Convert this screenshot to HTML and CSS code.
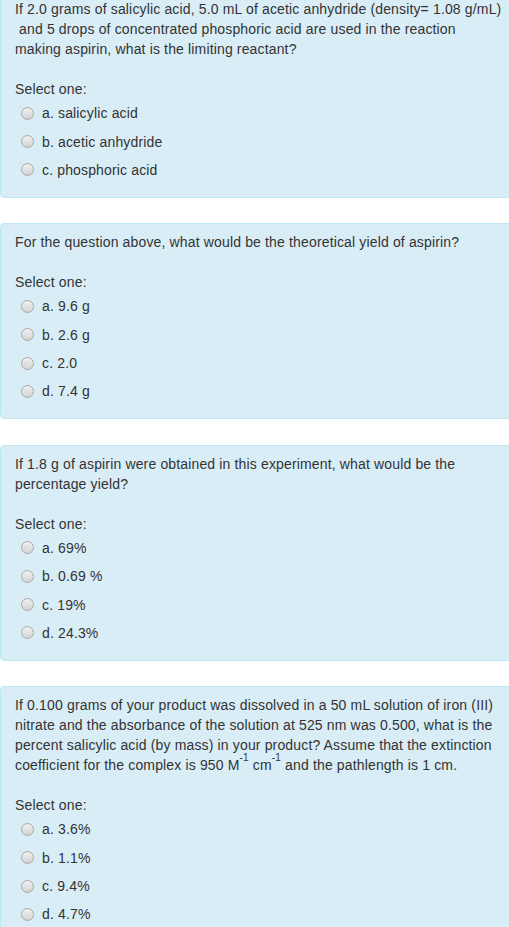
FILE: index.html
```html
<!DOCTYPE html>
<html lang="en">
<head>
<meta charset="utf-8">
<title>Quiz</title>
<link rel="stylesheet" href="styles.css">
</head>
<body>
<div class="page">
 <div class="list">
  <div class="que">
    <div class="qtext">If 2.0 grams of salicylic acid, 5.0 mL of acetic anhydride (density= 1.08 g/mL)<br>&nbsp;and 5 drops of concentrated phosphoric acid are used in the reaction<br>making aspirin, what is the limiting reactant?</div>
    <div class="prompt">Select one:</div>
    <div class="answers">
      <div class="opt"><span class="radio"></span><span class="label">a. salicylic acid</span></div>
      <div class="opt"><span class="radio"></span><span class="label">b. acetic anhydride</span></div>
      <div class="opt"><span class="radio"></span><span class="label">c. phosphoric acid</span></div>
    </div>
  </div>

  <div class="que">
    <div class="qtext">For the question above, what would be the theoretical yield of aspirin?</div>
    <div class="prompt">Select one:</div>
    <div class="answers">
      <div class="opt"><span class="radio"></span><span class="label">a. 9.6 g</span></div>
      <div class="opt"><span class="radio"></span><span class="label">b. 2.6 g</span></div>
      <div class="opt"><span class="radio"></span><span class="label">c. 2.0</span></div>
      <div class="opt"><span class="radio"></span><span class="label">d. 7.4 g</span></div>
    </div>
  </div>

  <div class="que">
    <div class="qtext">If 1.8 g of aspirin were obtained in this experiment, what would be the<br>percentage yield?</div>
    <div class="prompt">Select one:</div>
    <div class="answers">
      <div class="opt"><span class="radio"></span><span class="label">a. 69%</span></div>
      <div class="opt"><span class="radio"></span><span class="label">b. 0.69 %</span></div>
      <div class="opt"><span class="radio"></span><span class="label">c. 19%</span></div>
      <div class="opt"><span class="radio"></span><span class="label">d. 24.3%</span></div>
    </div>
  </div>

  <div class="que">
    <div class="qtext">If 0.100 grams of your product was dissolved in a 50 mL solution of iron (III)<br>nitrate and the absorbance of the solution at 525 nm was 0.500, what is the<br>percent salicylic acid (by mass) in your product? Assume that the extinction<br>coefficient for the complex is 950 M<sup>-1</sup> cm<sup>-1</sup> and the pathlength is 1 cm.</div>
    <div class="prompt">Select one:</div>
    <div class="answers">
      <div class="opt"><span class="radio"></span><span class="label">a. 3.6%</span></div>
      <div class="opt"><span class="radio"></span><span class="label">b. 1.1%</span></div>
      <div class="opt"><span class="radio"></span><span class="label">c. 9.4%</span></div>
      <div class="opt"><span class="radio"></span><span class="label">d. 4.7%</span></div>
    </div>
  </div>
 </div>
</div>
</body>
</html>
```

FILE: styles.css
```css
html {
  overflow: hidden;
  background: #ffffff;
}

body {
  margin: 0;
  font-family: "Liberation Sans", Arial, sans-serif;
  font-size: 14px;
  line-height: 20px;
  letter-spacing: 0.15px;
  color: #333333;
}

.page {
  overflow: hidden;
  height: 927px;
}

.list {
  margin-top: -10px;
  margin-right: -40px;
}

.que {
  background: #d9edf7;
  border: 1px solid #bce8f1;
  border-radius: 4px;
  padding: 8px 14px 12.6px 14px;
  margin-bottom: 25.4px;
}

.qtext {
  white-space: nowrap;
}

.qtext sup {
  font-size: 10px;
  line-height: 0;
  vertical-align: 9px;
}

.prompt {
  margin-top: 20px;
}

.opt {
  display: flex;
  align-items: center;
  padding: 4.2px 0;
}

.radio {
  flex: none;
  width: 13px;
  height: 13px;
  box-sizing: border-box;
  margin-left: 6px;
  margin-right: 8px;
  border-radius: 50%;
  border: 1px solid #a8a8a8;
  background: linear-gradient(#f0f0f0, #d4d4d4);
}

.label {
  white-space: nowrap;
}
```
